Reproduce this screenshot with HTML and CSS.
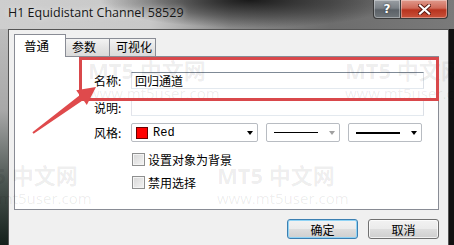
FILE: index.html
```html
<!DOCTYPE html>
<html lang="zh-CN">
<head>
    <meta charset="UTF-8">
    <meta name="viewport" content="width=device-width, initial-scale=1.0">
    <link rel="stylesheet" href="styles.css">
</head>
<body>
    <div class="window">
        <!-- Barra de título -->
        <div class="titlebar">
            <span class="title">H1 Equidistant Channel 58529</span>
            <div class="caption-buttons">
                <button class="cap-btn help">?</button>
                <button class="cap-btn close">
                    <svg width="13" height="11" viewBox="0 0 13 11">
                        <path d="M2 1.5 L11 9.5 M11 1.5 L2 9.5" stroke="#5a1a12" stroke-width="4" stroke-linecap="square"/>
                        <path d="M2 1.5 L11 9.5 M11 1.5 L2 9.5" stroke="#fff" stroke-width="2.2" stroke-linecap="square"/>
                    </svg>
                </button>
            </div>
        </div>

        <!-- Área do diálogo -->
        <div class="client">
            <div class="tabs">
                <div class="tab active">普通</div>
                <div class="tab">参数</div>
                <div class="tab wide">可视化</div>
            </div>
            <div class="panel">
                <div class="row">
                    <span class="label">名称:</span>
                    <div class="field">回归通道</div>
                </div>
                <div class="row">
                    <span class="label">说明:</span>
                    <div class="field"></div>
                </div>
                <div class="row style-row">
                    <span class="label">风格:</span>
                    <div class="select color-select">
                        <span class="swatch"></span>
                        <span class="select-text">Red</span>
                        <span class="caret"></span>
                    </div>
                    <div class="select line-select">
                        <span class="line thin"></span>
                        <span class="caret muted"></span>
                    </div>
                    <div class="select line-select">
                        <span class="line thick"></span>
                        <span class="caret"></span>
                    </div>
                </div>
                <div class="checks">
                    <div class="check"><span class="box"></span>设置对象为背景</div>
                    <div class="check"><span class="box"></span>禁用选择</div>
                </div>
            </div>
            <div class="actions">
                <button class="btn default">确定</button>
                <button class="btn">取消</button>
            </div>
        </div>

        <!-- Marca d'água -->
        <div class="watermark wm-1"><b>MT5 中文网</b><span>www.mt5user.com</span></div>
        <div class="watermark wm-2"><b>MT5 中文网</b><span>www.mt5user.com</span></div>
        <div class="watermark wm-3"><b>MT5 中文网</b><span>www.mt5user.com</span></div>
        <div class="watermark wm-4"><b>MT5 中文网</b><span>www.mt5user.com</span></div>

        <!-- Anotação vermelha -->
        <div class="highlight"></div>
        <svg class="pointer" width="454" height="245" viewBox="0 0 454 245">
            <polygon points="96,87 86.8,104.9 83.3,100 33.6,133.8 32.4,132.2 79.7,95.2 76.2,90.3" fill="#df4a4c"/>
        </svg>
    </div>
</body>
</html>
```

FILE: styles.css
```css
* {
    margin: 0;
    padding: 0;
    box-sizing: border-box;
}

body {
    width: 454px;
    height: 245px;
    overflow: hidden;
    font-family: "Noto Sans CJK SC", "Noto Sans", sans-serif;
    font-size: 12px;
    color: #000;
}

.window {
    position: relative;
    width: 454px;
    height: 245px;
    overflow: hidden;
    display: flex;
    flex-direction: column;
    background:
        linear-gradient(to right, transparent 0, transparent 449px, #111 449px),
        linear-gradient(to bottom, #c4c4c4 0%, #a8a8a8 45%, #4a5450 75%, #15201b 100%);
}

.titlebar {
    height: 29px;
    display: flex;
    align-items: flex-start;
    justify-content: space-between;
    padding-left: 8px;
    background:
        radial-gradient(ellipse 150px 28px at 250px 0, rgba(20, 20, 20, 0.95), rgba(40, 40, 40, 0.5) 60%, transparent 100%),
        linear-gradient(to right, #cecece 0, #c8c8c8 150px, #8a8a8a 230px, #6d6d6d 330px, #7a7a7a 454px);
}

.title {
    margin-top: 4px;
    font-family: "Open Sans", "Noto Sans", sans-serif;
    font-size: 12.5px;
    color: #161616;
    text-shadow: 0 0 6px rgba(255, 255, 255, 0.8);
}

.caption-buttons {
    display: flex;
    margin-right: 6px;
}

.cap-btn {
    height: 19px;
    border: 1px solid #3a3a3a;
    border-top: none;
    display: flex;
    align-items: center;
    justify-content: center;
    color: #fff;
    font-family: "DejaVu Sans", sans-serif;
    font-weight: bold;
    font-size: 12px;
    box-shadow: inset 0 0 0 1px rgba(255, 255, 255, 0.35);
}

.cap-btn.help {
    width: 28px;
    border-radius: 0 0 0 4px;
    background: linear-gradient(to bottom, #9a9fa4 0%, #7b8187 45%, #5b6167 55%, #6f757a 100%);
    text-shadow: 0 0 2px #222;
}

.cap-btn.close {
    width: 47px;
    border-left: none;
    border-radius: 0 0 4px 0;
    background: linear-gradient(to bottom, #e09a8c 0%, #cf6a58 45%, #b8341f 55%, #c9523a 100%);
}

.client {
    flex: 1;
    margin: 0 5px 0 8px;
    background: #f0f0f0;
    border: 1px solid #555;
    border-bottom: none;
    padding: 4px 9px 0 5px;
}

.tabs {
    display: flex;
    align-items: flex-end;
    height: 22px;
    position: relative;
    z-index: 1;
}

.tab {
    height: 18px;
    width: 45px;
    padding-left: 6px;
    border: 1px solid #898c95;
    border-bottom: none;
    margin-left: -1px;
    background: linear-gradient(to bottom, #f3f3f3, #e5e5e5 50%, #dadada);
    line-height: 16px;
}

.tab.wide {
    width: 47px;
}

.tab.active {
    height: 23px;
    width: 52px;
    margin-left: 0;
    margin-bottom: -1px;
    padding-left: 9px;
    background: #fff;
    line-height: 22px;
    font-size: 12.5px;
}

.panel {
    height: 154px;
    background: #fff;
    border: 1px solid #898c95;
    padding: 15px 0 0 79px;
}

.row {
    display: flex;
    align-items: center;
    height: 17px;
    margin-bottom: 10px;
}

.style-row {
    height: 19px;
    margin-top: -3px;
    margin-bottom: 0;
    gap: 8px;
}

.label {
    width: 37px;
    flex-shrink: 0;
}

.style-row .label {
    margin-right: -8px;
}

.field {
    width: 293px;
    height: 17px;
    border: 1px solid;
    border-color: #7f8a96 #dbdfe6 #e3e9ef #e2e3ea;
    padding-left: 3px;
    line-height: 15px;
}

.select {
    height: 19px;
    border: 1px solid #b8bcc2;
    border-radius: 2px;
    background: #fff;
    display: flex;
    align-items: center;
}

.color-select {
    width: 127px;
    padding-left: 4px;
}

.line-select {
    width: 74px;
    padding-left: 7px;
}

.swatch {
    width: 12px;
    height: 12px;
    background: #ff0000;
    border: 1px solid #6a0000;
    margin-right: 5px;
}

.select-text {
    font-family: "Liberation Mono", monospace;
    font-size: 12px;
}

.line {
    width: 44px;
    background: #000;
}

.line.thin {
    height: 1px;
}

.line.thick {
    height: 2px;
}

.caret {
    margin-left: auto;
    margin-right: 4px;
    width: 0;
    height: 0;
    border-left: 3.5px solid transparent;
    border-right: 3.5px solid transparent;
    border-top: 4px solid #000;
}

.caret.muted {
    border-top-color: #a0a0a0;
}

.checks {
    margin: 9px 0 0 38px;
    display: flex;
    flex-direction: column;
    gap: 7px;
}

.check {
    display: flex;
    align-items: center;
    height: 16px;
}

.box {
    width: 13px;
    height: 13px;
    border: 1px solid #8e8f8f;
    background: linear-gradient(135deg, #d6d6d6, #f4f4f4);
    box-shadow: inset 0 0 0 1px #f4f4f4;
    margin-right: 3px;
}

.actions {
    display: flex;
    justify-content: flex-end;
    gap: 10px;
    margin-top: 9px;
}

.btn {
    width: 71px;
    height: 20px;
    border: 1px solid #707070;
    border-radius: 3px;
    background: linear-gradient(to bottom, #f2f2f2 0%, #ebebeb 48%, #dddddd 52%, #cfcfcf 100%);
    box-shadow: inset 0 0 0 1px rgba(255, 255, 255, 0.7);
    font-family: "Noto Sans CJK SC", sans-serif;
    font-size: 12px;
    color: #000;
}

.btn.default {
    border-color: #3c7fb1;
    box-shadow: inset 0 0 0 1px #8fd3f5;
}

.watermark {
    position: absolute;
    display: flex;
    flex-direction: column;
    color: rgba(0, 0, 0, 0.08);
    pointer-events: none;
    white-space: nowrap;
}

.watermark b {
    font-family: "Open Sans", "Noto Sans CJK SC", sans-serif;
    font-size: 22px;
    line-height: 24px;
    font-weight: bold;
}

.watermark span {
    font-family: "Open Sans", sans-serif;
    font-size: 15px;
    line-height: 20px;
    margin-top: 1px;
}

.wm-1 { left: 88px; top: 58px; }
.wm-2 { left: 345px; top: 58px; }
.wm-3 { left: -40px; top: 163px; }
.wm-4 { left: 217px; top: 163px; }

.highlight {
    position: absolute;
    left: 79px;
    top: 57px;
    width: 360px;
    height: 44px;
    border: 3px solid #d9484b;
    pointer-events: none;
}

.pointer {
    position: absolute;
    left: 0;
    top: 0;
    pointer-events: none;
}
```
